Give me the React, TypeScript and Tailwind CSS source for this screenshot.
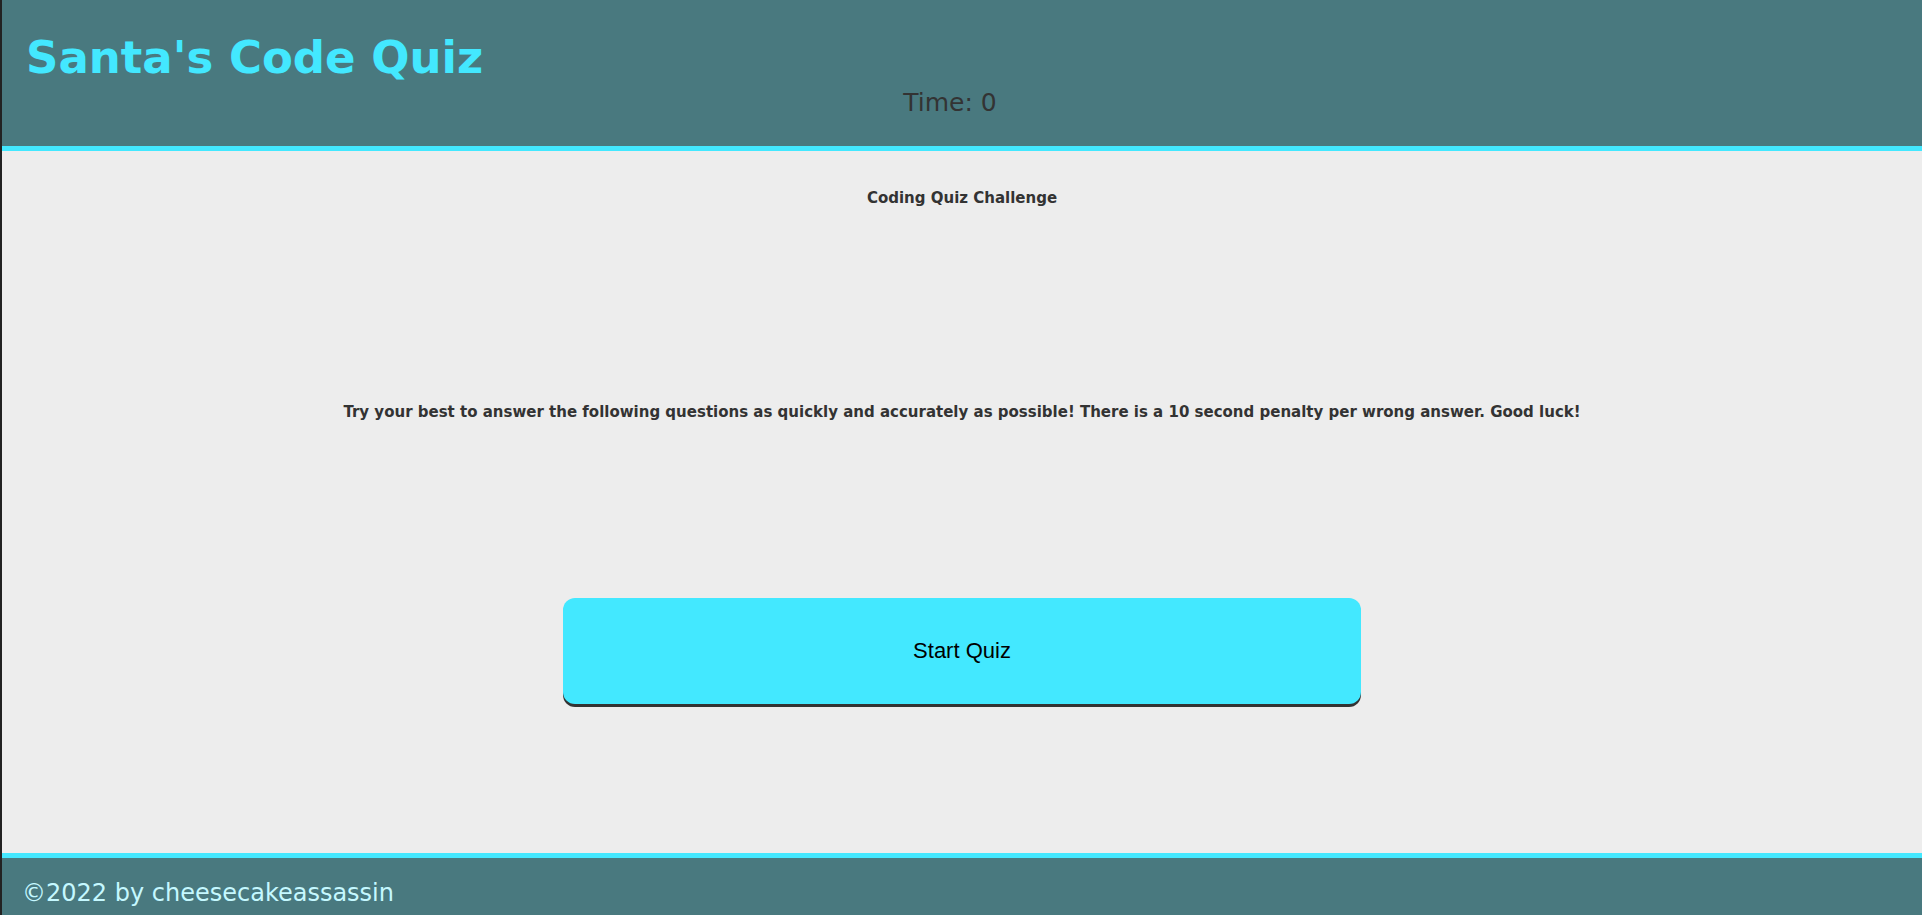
export default function App() {
  return (
    <div className="flex min-h-screen flex-col border-l-2 border-[#222] bg-[#ededed] font-['Verdana','DejaVu_Sans',sans-serif] text-[#333]">
      <header className="border-b-5 border-[#43e8ff] bg-[#49797f] px-6 pt-7 pb-7">
        <h1 className="text-[45px] leading-[60px] font-bold text-[#43e8ff]">Santa's Code Quiz</h1>
        <p className="pr-6 text-center text-[25px] leading-[30px]">Time: 0</p>
      </header>
      <main className="flex flex-1 flex-col items-center px-4 pt-9">
        <h2 className="text-[15px] leading-[22px] font-bold">Coding Quiz Challenge</h2>
        <p className="mt-48 text-center text-[15px] leading-[22px] font-bold">
          Try your best to answer the following questions as quickly and accurately as possible! There is a 10 second penalty per wrong answer. Good luck!
        </p>
        <button className="mt-[175px] h-[106px] w-[798px] max-w-full rounded-xl bg-[#43e8ff] pb-0.5 font-['Liberation_Sans',Arial,sans-serif] text-[22px] text-black shadow-[0_3px_0_#333]">
          Start Quiz
        </button>
      </main>
      <footer className="border-t-5 border-[#43e8ff] bg-[#49797f] px-5 pt-[19px] pb-[6px]">
        <p className="text-2xl leading-8 text-[#c5f8ff]">©2022 by cheesecakeassassin</p>
      </footer>
    </div>
  );
}
